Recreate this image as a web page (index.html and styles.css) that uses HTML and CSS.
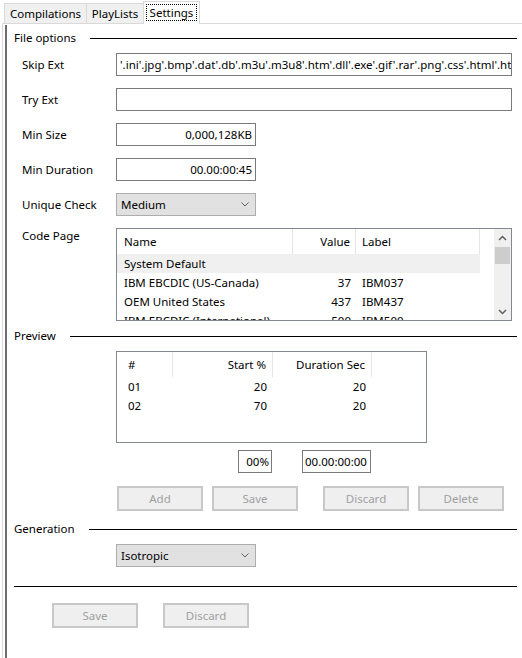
FILE: index.html
```html
<!DOCTYPE html>
<html>
<head>
<meta charset="utf-8">
<link rel="stylesheet" href="styles.css">
</head>
<body>
<div class="tabs">
  <div class="tab tab-compilations">Compilations</div>
  <div class="tab tab-playlists">PlayLists</div>
  <div class="tab active"><span class="focus">Settings</span></div>
</div>
<div class="panel">
  <div class="inner">
    <div class="group-head first"><span>File options</span><i class="rule"></i></div>
    <div class="form">
      <div class="label">Skip Ext</div>
      <div class="field">'.ini'.jpg'.bmp'.dat'.db'.m3u'.m3u8'.htm'.dll'.exe'.gif'.rar'.png'.css'.html'.htm'.js'.txt'</div>
      <div class="label">Try Ext</div>
      <div class="field"></div>
      <div class="label">Min Size</div>
      <div class="field short right">0,000,128KB</div>
      <div class="label">Min Duration</div>
      <div class="field short right">00.00:00:45</div>
      <div class="label">Unique Check</div>
      <div class="select"><span>Medium</span><svg class="chev" width="8" height="5" viewBox="0 0 8 5"><polyline points="0.5,0.5 4,4 7.5,0.5" fill="none" stroke="#606060" stroke-width="1"/></svg></div>
      <div class="label top">Code Page</div>
      <div class="lv">
        <div class="lv-cols">
          <div class="lv-row lv-head">
            <div class="cell c-name">Name</div>
            <div class="cell c-val">Value</div>
            <div class="cell c-lbl">Label</div>
          </div>
          <div class="lv-row sel">
            <div class="cell c-name">System Default</div>
            <div class="cell c-val"></div>
            <div class="cell c-lbl"></div>
          </div>
          <div class="lv-row">
            <div class="cell c-name">IBM EBCDIC (US-Canada)</div>
            <div class="cell c-val">37</div>
            <div class="cell c-lbl">IBM037</div>
          </div>
          <div class="lv-row">
            <div class="cell c-name">OEM United States</div>
            <div class="cell c-val">437</div>
            <div class="cell c-lbl">IBM437</div>
          </div>
          <div class="lv-row">
            <div class="cell c-name">IBM EBCDIC (International)</div>
            <div class="cell c-val">500</div>
            <div class="cell c-lbl">IBM500</div>
          </div>
        </div>
        <div class="lv-scroll">
          <div class="sb-btn"><svg width="9" height="6" viewBox="0 0 9 6"><polyline points="1,5 4.5,1.5 8,5" fill="none" stroke="#606060" stroke-width="1.5"/></svg></div>
          <div class="sb-thumb"></div>
          <div class="sb-track"></div>
          <div class="sb-btn"><svg width="9" height="6" viewBox="0 0 9 6"><polyline points="1,1 4.5,4.5 8,1" fill="none" stroke="#606060" stroke-width="1.5"/></svg></div>
        </div>
      </div>
    </div>

    <div class="group-head preview-head"><span>Preview</span><i class="rule"></i></div>
    <div class="block">
      <div class="plv">
        <div class="p-row p-head">
          <div class="cell p-num">#</div>
          <div class="cell p-start">Start %</div>
          <div class="cell p-dur">Duration Sec</div>
        </div>
        <div class="p-row">
          <div class="cell p-num">01</div>
          <div class="cell p-start">20</div>
          <div class="cell p-dur">20</div>
        </div>
        <div class="p-row">
          <div class="cell p-num">02</div>
          <div class="cell p-start">70</div>
          <div class="cell p-dur">20</div>
        </div>
      </div>
      <div class="small-row">
        <div class="field pct right">00%</div>
        <div class="field time">00.00:00:00</div>
      </div>
      <div class="btn-row">
        <div class="btn">Add</div>
        <div class="btn">Save</div>
        <div class="btn wide-gap">Discard</div>
        <div class="btn">Delete</div>
      </div>
    </div>

    <div class="group-head gen-head"><span>Generation</span><i class="rule"></i></div>
    <div class="block">
      <div class="select gen-select"><span>Isotropic</span><svg class="chev" width="8" height="5" viewBox="0 0 8 5"><polyline points="0.5,0.5 4,4 7.5,0.5" fill="none" stroke="#606060" stroke-width="1"/></svg></div>
    </div>
    <div class="separator"></div>
    <div class="bottom-btns">
      <div class="btn">Save</div>
      <div class="btn wide-gap">Discard</div>
    </div>
  </div>
</div>
</body>
</html>
```

FILE: styles.css
```css
* { box-sizing: border-box; }
html, body { height: 100%; }
body {
  margin: 0;
  background: #fff;
  font-family: "Noto Sans", "Segoe UI", sans-serif;
  font-size: 11.5px;
  line-height: 16px;
  color: #000;
  display: flex;
  flex-direction: column;
  overflow: hidden;
}

/* tabs */
.tabs {
  flex: none;
  display: flex;
  align-items: flex-end;
  height: 23px;
  padding-left: 4px;
}
.tab {
  height: 20px;
  border: 1px solid #d9d9d9;
  border-bottom: none;
  background: #f0f0f0;
  display: flex;
  align-items: center;
  justify-content: center;
  white-space: nowrap;
}
.tab + .tab { border-left: none; }
.tab-compilations { width: 83px; }
.tab-playlists { width: 57px; }
.tab.active {
  width: 57px;
  height: 23px;
  margin-bottom: -1px;
  margin-left: -1px;
  border-left: 1px solid #d9d9d9;
  background: #fff;
  position: relative;
  z-index: 1;
  align-items: flex-start;
  padding-top: 2px;
}
.focus {
  border: 1px dotted #000;
  padding: 0 3px;
  line-height: 15px;
}

/* panel */
.panel {
  flex: 1;
  display: flex;
  margin-left: 2px;
  border-left: 1px solid #d9d9d9;
  border-top: 1px solid #d9d9d9;
  padding: 1px 0 0 2px;
}
.inner {
  flex: 1;
  border-left: 2px solid #6d6d6d;
  padding: 0 5px 0 7px;
}

.group-head {
  display: flex;
  align-items: center;
  height: 16px;
}
.group-head.first { margin-top: 5px; }
.group-head .rule {
  flex: 1;
  height: 1px;
  background: #000;
  margin-left: 14px;
}
.preview-head { margin-top: 7px; }
.gen-head { margin-top: 10px; }

/* form */
.form {
  display: grid;
  grid-template-columns: 94px 1fr;
  row-gap: 12px;
  padding: 0 5px 0 8px;
  margin-top: 7px;
}
.label {
  display: flex;
  align-items: center;
  white-space: nowrap;
}
.label.top { align-items: flex-start; }

.field {
  height: 23px;
  border: 1px solid #7a7a7a;
  background: #fff;
  padding: 0 3px;
  display: flex;
  align-items: center;
  white-space: nowrap;
  overflow: hidden;
}
.short { width: 140px; }
.right { justify-content: flex-end; }

.select {
  height: 23px;
  width: 140px;
  border: 1px solid #adadad;
  background: #e1e1e1;
  display: flex;
  align-items: center;
  justify-content: space-between;
  padding: 0 6px 0 4px;
}
.chev { display: block; }

/* list view */
.lv {
  height: 93px;
  border: 1px solid #828790;
  display: flex;
  overflow: hidden;
}
.lv-cols { flex: 1; overflow: hidden; }
.lv-row {
  display: grid;
  grid-template-columns: 176px 63px 124px;
  height: 19px;
  align-items: center;
}
.lv-row .cell { white-space: nowrap; overflow: hidden; }
.lv-head { height: 25px; align-items: stretch; }
.lv-head .cell {
  border-right: 1px solid #e5e5e5;
  display: flex;
  align-items: center;
}
.lv-row.sel { background: #f0f0f0; width: 363px; }
.c-name { padding-left: 7px; }
.c-val { text-align: right; padding-right: 5px; }
.lv-head .c-val { justify-content: flex-end; }
.c-lbl { padding-left: 6px; }

.lv-scroll {
  flex: none;
  width: 17px;
  background: #f0f0f0;
  display: flex;
  flex-direction: column;
  align-items: center;
}
.sb-btn {
  height: 17px;
  width: 17px;
  display: flex;
  align-items: center;
  justify-content: center;
}
.sb-thumb {
  width: 15px;
  height: 17px;
  background: #cdcdcd;
  margin-top: 1px;
}
.sb-track { flex: 1; }

/* preview */
.block { padding-left: 102px; }
.plv {
  margin-top: 7px;
  width: 311px;
  height: 92px;
  border: 1px solid #828790;
}
.p-row {
  display: grid;
  grid-template-columns: 56px 100px 99px;
  height: 19px;
  align-items: center;
}
.p-head { height: 25px; align-items: stretch; }
.p-head .cell {
  border-right: 1px solid #e5e5e5;
  display: flex;
  align-items: center;
}
.p-num { padding-left: 11px; }
.p-start, .p-dur { text-align: right; padding-right: 6px; }
.p-head .p-start, .p-head .p-dur { justify-content: flex-end; }

.small-row {
  display: flex;
  margin-top: 7px;
  padding-left: 122px;
  gap: 30px;
}
.pct { width: 34px; padding: 0 2px; }
.time { width: 69px; padding: 0 2px; }

.btn-row {
  display: flex;
  margin-top: 13px;
  padding-left: 1px;
  gap: 9px;
}
.btn {
  width: 86px;
  height: 25px;
  border: 2px solid #c8c8c8;
  background: #efefef;
  color: #a0a0a0;
  display: flex;
  align-items: center;
  justify-content: center;
}
.btn.wide-gap { margin-left: 16px; }

.gen-select { margin-top: 7px; }

.separator {
  height: 1px;
  background: #000;
  margin-top: 19px;
}
.bottom-btns {
  display: flex;
  margin-top: 16px;
  padding-left: 38px;
  gap: 9px;
}
```
